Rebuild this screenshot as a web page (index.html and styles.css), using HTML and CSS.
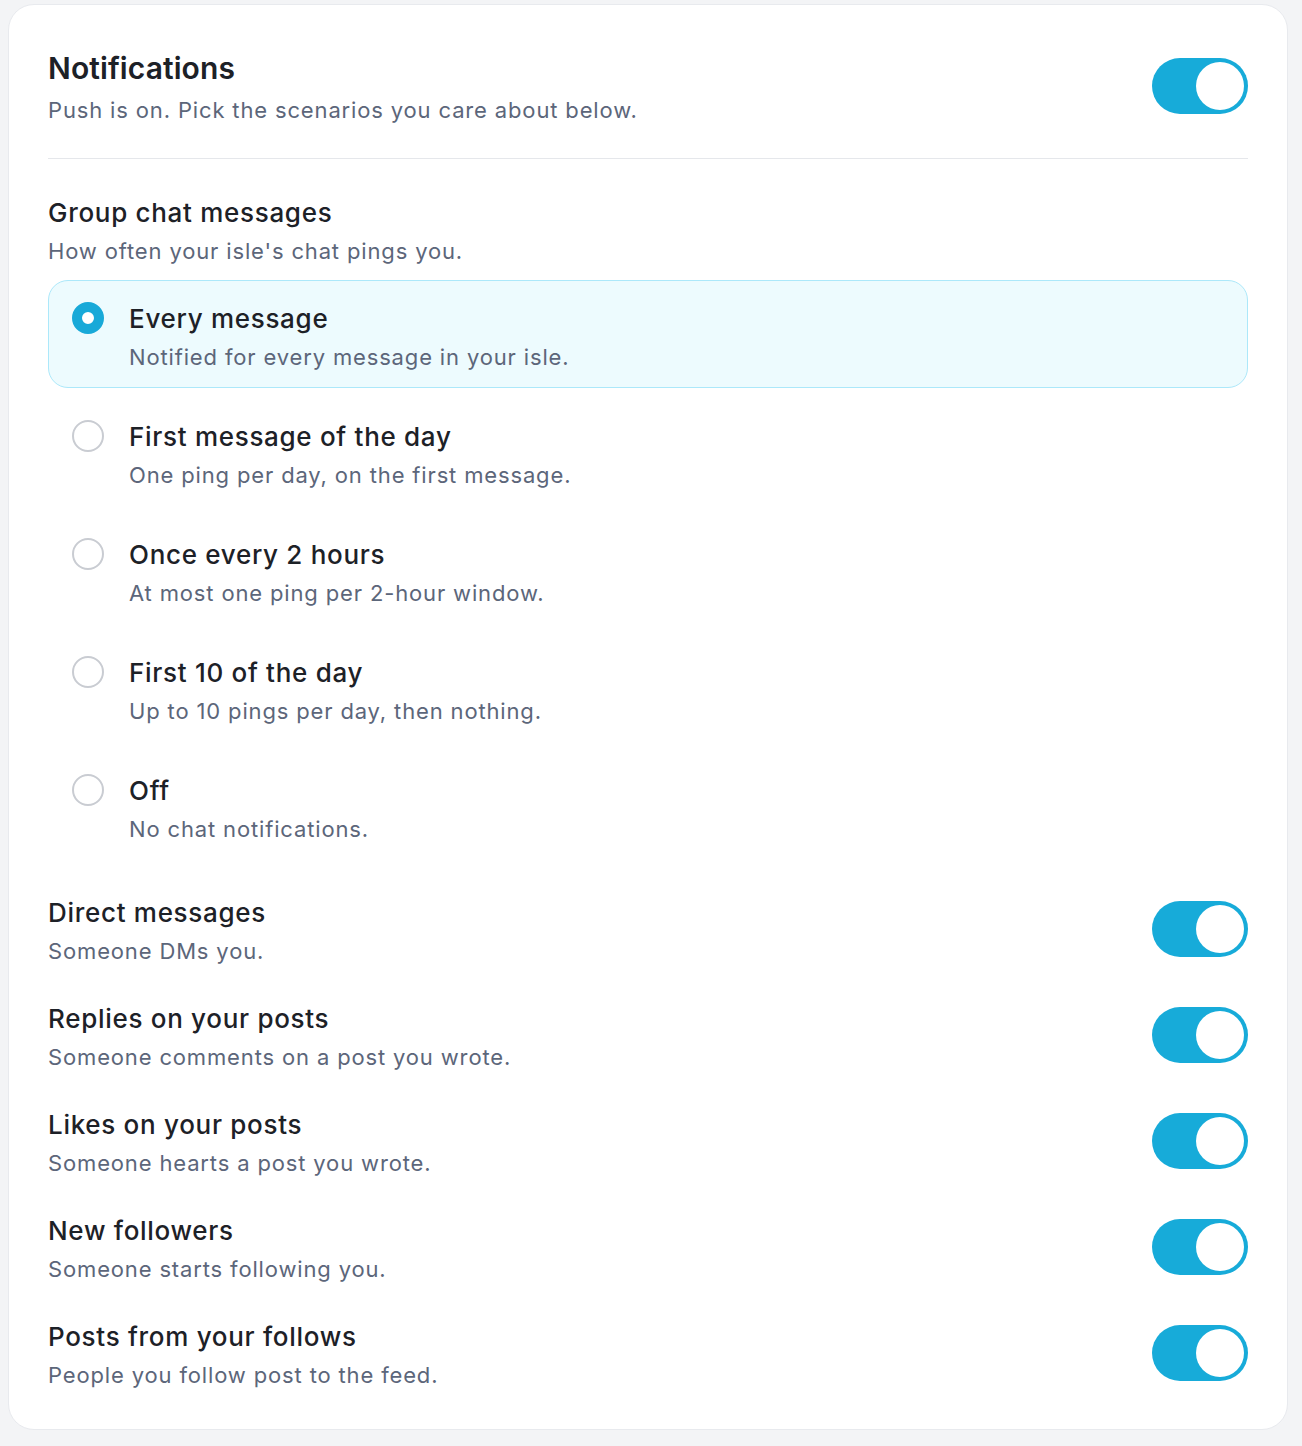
FILE: index.html
```html
<!DOCTYPE html>
<html lang="en">
<head>
<meta charset="utf-8">
<title>Notifications</title>
<link rel="stylesheet" href="styles.css">
</head>
<body>
<main class="card">
  <header class="head">
    <div class="text">
      <h1 class="h-title">Notifications</h1>
      <p class="desc">Push is on. Pick the scenarios you care about below.</p>
    </div>
    <span class="toggle on"><span class="knob"></span></span>
  </header>
  <hr class="divider">

  <section class="group">
    <div class="text">
      <h2 class="title">Group chat messages</h2>
      <p class="desc">How often your isle's chat pings you.</p>
    </div>
    <div class="options">
      <div class="option selected">
        <span class="radio checked"></span>
        <div class="text">
          <div class="title">Every message</div>
          <p class="desc">Notified for every message in your isle.</p>
        </div>
      </div>
      <div class="option">
        <span class="radio"></span>
        <div class="text">
          <div class="title">First message of the day</div>
          <p class="desc">One ping per day, on the first message.</p>
        </div>
      </div>
      <div class="option">
        <span class="radio"></span>
        <div class="text">
          <div class="title">Once every 2 hours</div>
          <p class="desc">At most one ping per 2-hour window.</p>
        </div>
      </div>
      <div class="option">
        <span class="radio"></span>
        <div class="text">
          <div class="title">First 10 of the day</div>
          <p class="desc">Up to 10 pings per day, then nothing.</p>
        </div>
      </div>
      <div class="option">
        <span class="radio"></span>
        <div class="text">
          <div class="title">Off</div>
          <p class="desc">No chat notifications.</p>
        </div>
      </div>
    </div>
  </section>

  <div class="rows">
    <div class="row">
      <div class="text">
        <div class="title">Direct messages</div>
        <p class="desc">Someone DMs you.</p>
      </div>
      <span class="toggle on"><span class="knob"></span></span>
    </div>
    <div class="row">
      <div class="text">
        <div class="title">Replies on your posts</div>
        <p class="desc">Someone comments on a post you wrote.</p>
      </div>
      <span class="toggle on"><span class="knob"></span></span>
    </div>
    <div class="row">
      <div class="text">
        <div class="title">Likes on your posts</div>
        <p class="desc">Someone hearts a post you wrote.</p>
      </div>
      <span class="toggle on"><span class="knob"></span></span>
    </div>
    <div class="row">
      <div class="text">
        <div class="title">New followers</div>
        <p class="desc">Someone starts following you.</p>
      </div>
      <span class="toggle on"><span class="knob"></span></span>
    </div>
    <div class="row">
      <div class="text">
        <div class="title">Posts from your follows</div>
        <p class="desc">People you follow post to the feed.</p>
      </div>
      <span class="toggle on"><span class="knob"></span></span>
    </div>
  </div>
</main>
</body>
</html>
```

FILE: styles.css
```css
* { box-sizing: border-box; }
html, body { margin: 0; }
body {
  background: #f3f4f6;
  padding: 4px 14px 16px 8px;
  font-family: Inter, "Noto Sans", "Liberation Sans", sans-serif;
  color: #1d2127;
}
.card {
  width: 1280px;
  background: #fff;
  border: 1px solid #e8eaee;
  border-radius: 26px;
  padding: 45px 39px 40px 39px;
}
.head {
  display: flex;
  align-items: flex-start;
  justify-content: space-between;
}
.head .toggle { margin-top: 8px; }
.text { display: flex; flex-direction: column; }
.h-title {
  margin: 0;
  font-size: 30px;
  line-height: 36px;
  font-weight: 600;
  letter-spacing: 0.1px;
  color: #1d2127;
}
.title {
  margin: 0;
  font-size: 26px;
  line-height: 32px;
  font-weight: 500;
  letter-spacing: 0.7px;
  color: #1d2127;
}
.desc {
  margin: 8px 0 0;
  font-size: 22px;
  line-height: 28px;
  font-weight: 400;
  color: #5c667a;
  letter-spacing: 0.85px;
}
.head .desc { margin-top: 10px; }
.divider {
  border: 0;
  height: 1px;
  background: #e5e7eb;
  margin: 34px 0 38px;
}
.options {
  display: flex;
  flex-direction: column;
  gap: 10px;
  margin-top: 15px;
}
.option {
  display: flex;
  align-items: flex-start;
  gap: 25px;
  padding: 22px 24px 16px 23px;
  border: 1px solid transparent;
  border-radius: 20px;
}
.option.selected {
  background: #edfbfe;
  border-color: #ace8fa;
}
.radio {
  flex: none;
  width: 32px;
  height: 32px;
  border-radius: 50%;
  border: 2px solid #c9ccd2;
  background: #fff;
  margin-top: -1px;
}
.radio.checked {
  border: 10px solid #18a9d8;
  background: #fff;
}
.rows {
  display: flex;
  flex-direction: column;
  gap: 38px;
  margin-top: 37px;
}
.row {
  display: flex;
  align-items: flex-start;
  justify-content: space-between;
}
.row .toggle { margin-top: 4px; }
.toggle {
  flex: none;
  width: 96px;
  height: 56px;
  border-radius: 28px;
  background: #e1e4e8;
  padding: 4px;
  display: flex;
}
.toggle.on {
  background: #17abd9;
  justify-content: flex-end;
}
.knob {
  width: 48px;
  height: 48px;
  border-radius: 50%;
  background: #fff;
}
```
